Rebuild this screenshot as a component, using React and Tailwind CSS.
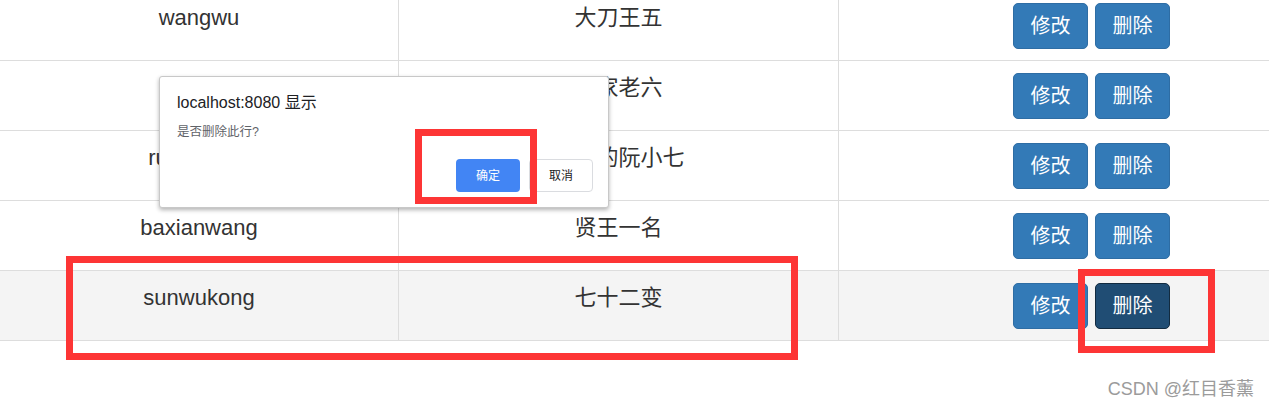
import React from 'react';

const rows = [
  { name: 'wangwu', nick: '大刀王五' },
  { name: 'laoliu', nick: '冯家老六' },
  { name: 'ruanxiaoqi', nick: '阎罗的阮小七' },
  { name: 'baxianwang', nick: '贤王一名' },
  { name: 'sunwukong', nick: '七十二变', hover: true },
];

const font = "font-['Liberation_Sans','Noto_Sans_CJK_SC',sans-serif]";

function Btn({ children, active }) {
  return (
    <button
      className={
        active
          ? 'h-[46px] w-[75px] rounded-[5px] border border-[#122b40] bg-[#204d74] text-[20px] text-white'
          : 'h-[46px] w-[75px] rounded-[5px] border border-[#2e6da4] bg-[#337ab7] text-[20px] text-white'
      }
    >
      {children}
    </button>
  );
}

function Row({ row }) {
  return (
    <div
      className={
        row.hover
          ? 'grid h-[70px] grid-cols-[399px_440px_505px] border-b border-[#dddddd] bg-[#f4f4f4]'
          : 'grid h-[70px] grid-cols-[399px_440px_505px] border-b border-[#dddddd]'
      }
    >
      <div className="border-r border-[#dddddd] pt-[11px] text-center text-[22px] leading-[32px] text-[#333333]">
        {row.name}
      </div>
      <div className="border-r border-[#dddddd] pt-[11px] text-center text-[22px] leading-[32px] text-[#333333]">
        {row.nick}
      </div>
      <div className="flex items-center justify-center gap-[7px]">
        <Btn>修改</Btn>
        <Btn active={row.hover}>删除</Btn>
      </div>
    </div>
  );
}

export default function App() {
  return (
    <div className={`relative h-[409px] w-[1269px] overflow-hidden bg-white ${font}`}>
      <div className="-mt-[9px] w-[1344px]">
        {rows.map((r) => (
          <Row key={r.name} row={r} />
        ))}
      </div>

      {/* alert dialog */}
      <div className="absolute left-[159px] top-[76px] h-[132px] w-[450px] rounded-[3px] border border-[#c8c8c8] bg-white shadow-[0_2px_4px_rgba(0,0,0,0.3)]">
        <div className="pl-[17px] pt-[15px] text-[16px] leading-[22px] text-[#202124]">localhost:8080 显示</div>
        <div className="pl-[17px] pt-[9px] text-[12.5px] leading-[18px] text-[#5f6368]">是否删除此行?</div>
        <div className="flex justify-end gap-[9px] pr-[15px] pt-[18px]">
          <button className="h-[33px] w-[64px] rounded-[4px] bg-[#4285f4] text-[12px] text-white">确定</button>
          <button className="h-[33px] w-[64px] rounded-[4px] border border-[#dadce0] bg-white text-[12px] text-[#202124]">取消</button>
        </div>
      </div>

      {/* annotations */}
      <div className="absolute left-[415px] top-[129px] h-[75px] w-[122px] border-[7px] border-[#fd3535]" />
      <div className="absolute left-[66px] top-[256px] h-[104px] w-[732px] border-[7px] border-[#fd3535]" />
      <div className="absolute left-[1078px] top-[269px] h-[84px] w-[137px] border-[7px] border-[#fd3535]" />

      <div className="absolute right-[15px] top-[377px] text-[18px] leading-[24px] text-[#9b9b9b]">CSDN @红目香薰</div>
    </div>
  );
}
